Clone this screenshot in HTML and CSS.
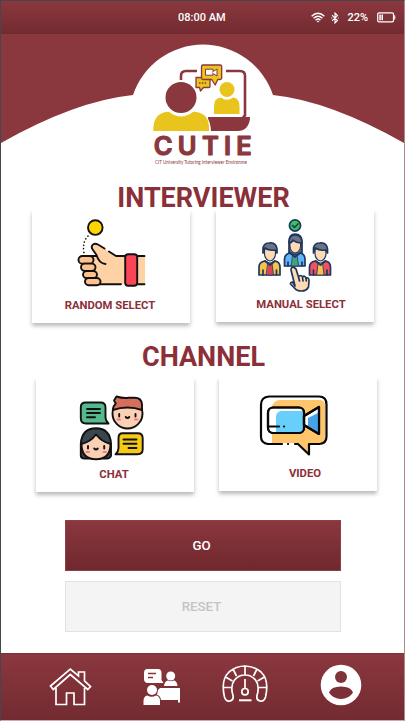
FILE: index.html
```html
<!DOCTYPE html>
<html lang="en">
<head>
<meta charset="utf-8">
<title>CUTIE</title>
<link rel="stylesheet" href="styles.css">
</head>
<body>
<div class="app">
  <div class="status">
    <span class="time">08:00 AM</span>
    <div class="indicators">
      <svg class="wifi" width="14" height="11" viewBox="0 0 14 11" fill="none" stroke="#fff" stroke-width="1.4"><path d="M.6 4.2Q7-1.8 13.4 4.2M2.6 6.3Q7 2 11.4 6.3M4.6 8.2Q7 6 9.4 8.2"/><path d="M5.7 9.2 7 10.6l1.300-1.400Q7 8.300 5.700 9.200Z" fill="#fff" stroke="none"/></svg>
      <svg class="bluetooth" width="8" height="12" viewBox="0 0 8 12" fill="none" stroke="#fff" stroke-width="1.100"><path d="m1 3.200 5.500 5.300L4 11V1l2.500 2.500L1 8.800M.2 6h1M6.700 6h1"/></svg>
      <span class="percent">22%</span>
      <svg class="battery" width="19" height="11" viewBox="0 0 19 11"><rect x=".7" y=".9" width="15.800" height="9" rx="1.300" fill="none" stroke="#fff" stroke-width="1.200"/><path d="M2.300 2.500h1.500v5.800H2.300zM4.500 2.500h1.500v5.800H4.500zM17.200 3q1.200 0 1.200 2.400t-1.200 2.400z" fill="#fff"/></svg>
    </div>
  </div>

  <svg class="hero" width="403" height="140" viewBox="1 34 403 140">
    <path d="M0 34H405V143.500Q330 101 273 95A73.800 73.800 0 0 0 133 95Q75 101 0 143.500Z" fill="#8b373e"/>
    <g fill="none" stroke="#8b373e" stroke-width="2.600"><path d="M181 80v-4q0-5 5-5h11M226 71h14q5 0 5 5v39.500l-2 2"/></g>
    <path d="M208 117h42v2q-2 12-12 12h-30z" fill="#8b373e"/>
    <path d="M151 133q0-23 20-23h20q20 0 20 23" fill="#fff"/>
    <path d="M153.300 131v-3q1-16 15.500-16.300 12.200 9.600 24.400 0Q209 112 209 128v3z" fill="#e8c41c"/>
    <circle cx="181" cy="97.500" r="15.500" fill="#8b373e"/>
    <circle cx="227" cy="89.500" r="7.500" fill="#e8c41c"/>
    <path d="M214 114v-8q0-8 7-8.500 6 4.500 12 0 6.500.5 6.500 8.500v8z" fill="#e8c41c"/>
    <g fill="#e8c41c" stroke="#8b373e" stroke-width="1.300" stroke-linejoin="round"><path d="M196 77.500h13q1 0 1 1v8q0 1-1 1h-5.500l-3 3.500-1-3.500H196z"/><path d="M203 65h17q1.700 0 1.700 1.700V78q0 1.500-1.700 1.500h-2.300l-2.500 5.500-3.500-5.500H203q-1.500 0-1.500-1.500V66.500q0-1.500 1.500-1.500z"/></g>
    <g fill="none" stroke="#8b373e" stroke-width="1"><path d="M205.500 69.200h7.500v6h-7.500z" fill="#fff"/><path d="m213 71.500 4-2.500v7l-4-2.500" fill="#fff"/><path d="M199 83h8" stroke-width="1.500" stroke-dasharray="1.500 1.300"/></g>
    <text class="brand" x="153.800" y="155" textLength="98">CUTIE</text>
    <text class="tagline" x="155" y="164.300" textLength="92" lengthAdjust="spacingAndGlyphs">CIT University Tutoring Interviewer Environme</text>
  </svg>

  <h2 class="title">INTERVIEWER</h2>
  <div class="cards people">
    <div class="card random">
      <svg width="72" height="72" viewBox="76 217 72 72" stroke="#111" stroke-width="1.900" stroke-linecap="round" stroke-linejoin="round">
        <circle cx="95.300" cy="227.600" r="7.300" fill="#ffd400"/>
        <path d="M88 236q-6 6-4 17" fill="none" stroke-width="1.600" stroke-dasharray=".1 3.400"/>
        <path d="M145 256h-29L98 244.500q-6-2-6 3 1 3 5 8.500H84v28h61z" fill="#fed2a4" stroke="none"/>
        <path d="M125 256h-9l-7-4.500M104.500 248.500 98 244.500c-5-2.500-8 2-5 5.500l3.500 5q2.500 8.500 9 9M98 284.300h23M138 256h6.500M138 284.300h6.500M83 256h13.500" fill="none"/>
        <g fill="#fdc18d"><rect x="78.500" y="256" width="15" height="7.700" rx="3.800"/><rect x="81" y="263.600" width="14.500" height="7.400" rx="3.700"/><rect x="83" y="271" width="14" height="7.200" rx="3.600"/><rect x="85" y="278" width="15.500" height="7.200" rx="3.600"/></g>
        <rect x="125.200" y="254.200" width="12" height="31.500" rx="3" fill="#fb4455"/>
      </svg>
      <span>RANDOM SELECT</span>
    </div>
    <div class="card manual">
      <svg width="76" height="76" viewBox="258 218 76 76" stroke="#20375f" stroke-width="1.700" stroke-linecap="round" stroke-linejoin="round">
        <circle cx="296" cy="226.500" r="5.600" fill="#36c65b"/><path d="m293.500 226.500 2 2 3.500-3.500" fill="none"/>
        <g><path d="M260 276v-8q0-5 6-6l5 3 5-3q5 1 5 6v8z" fill="#f4c44e"/><path d="M269 264h4l1.500 12h-7z" fill="#de4257" stroke-width=".8"/><path d="M265.500 250v5q.5 6 5.500 7 5-1 5.500-7v-5z" fill="#ffdbb3" stroke-width="1.200"/><path d="M264 254v-5q1-5 6-5 7-1 8 6v4l-2-3q-6 1-10-2l-2 5z" fill="#6a7488"/><path d="m266 262 5 4 5-4M264 271v5M277.500 271v5" fill="none"/></g>
        <g><path d="M290 256v-13q0-8 6-8 7 0 7 8v13z" fill="#59647b"/><path d="M285.500 267v-7q0-5 6-6l4.500 3 5-3q5 1 5 6v7z" fill="#5fb5fa"/><path d="M294 256h4l1.500 11h-7z" fill="#45a178" stroke-width=".8"/><path d="M291 242v5q.5 6 5 7 5-1 5.500-7v-5z" fill="#ffdbb3" stroke-width="1"/><path d="M290 244q0-8 6-8 7 0 7 8-6 0-9-3-1 3-4 3z" fill="#6a7488"/><path d="m291 254 5 4 5-4M289 263v4M303 263v4" fill="none"/></g>
        <g transform="translate(50.500 0)"><path d="M260 276v-8q0-5 6-6l5 3 5-3q5 1 5 6v8z" fill="#f05360"/><path d="M269 264h4l1.500 12h-7z" fill="#f4c44e" stroke-width=".8"/><path d="M265.500 250v5q.5 6 5.500 7 5-1 5.500-7v-5z" fill="#ffdbb3" stroke-width="1.200"/><path d="M264 254v-5q1-5 6-5 7-1 8 6v4l-2-3q-6 1-10-2l-2 5z" fill="#6a7488"/><path d="m266 262 5 4 5-4M264 271v5M277.500 271v5" fill="none"/></g>
        <path d="m296 287-4-16q0-3 2.500-3l2.500 2 2.500 8q2-3 4 0 2-2 3.500 1 3-1 3 3l-.5 6q-2 4-7 4-5 0-7-3l-4-4q0-2 2-2zM299.500 278l1 4M303.500 278l.5 4M307 279l.3 3" fill="#ffdbb3"/>
      </svg>
      <span>MANUAL SELECT</span>
    </div>
  </div>

  <h2 class="title channel">CHANNEL</h2>
  <div class="cards media">
    <div class="card chat">
      <svg width="68" height="68" viewBox="78 394 68 68" stroke="#111" stroke-width="1.900" stroke-linecap="round" stroke-linejoin="round">
        <path d="M85.500 402.500h15q5 0 5 5v10q0 3 3 6H86q-5.200 0-5.200-5v-11q0-5 4.700-5z" fill="#55b98d"/><path d="M87 409h13M87 413h13M87 417.200h8" fill="none"/>
        <circle cx="127.500" cy="413.500" r="15" fill="#fbd0b4"/><path d="M112.800 410q.2-4 3-6.500l-1.800-3 2.500-4q6 2 12 1.300h6q7 0 7.500 6.500v5.700q-14.500-5-29.200 0z" fill="#d56e5c"/>
        <path d="M80.800 456v-12.500Q82 428.500 96 428.300q14 .2 15 15.200V456q-1 2.500-4 2.500H84.500q-3.200 0-3.700-2.500z" fill="#38464d"/><path d="M81.500 444q9-2 14.500-9.500 6 7.500 14.500 9.500 0 15-14.500 15.300Q81.500 459 81.500 444z" fill="#fbd0b4"/>
        <path d="M122.500 433.300h15.200q5 0 5 5v11q0 5-5 5h-22.200q3-3 3-6v-10q0-5 4-5z" fill="#f5c915"/><path d="M123.500 439.500h13M123.500 443.800h13M128.500 448h8M119.200 414v2.500M135.500 414v2.500M125.700 417q1.800 2 3.600 0M88 446v2.500M104.200 446v2.500M94.200 448.500q1.800 2 3.600 0" fill="none"/>
        <path d="M117.500 419.500h2.500M135 419.500h2.500M86.500 452h2.500M103.500 452h2.500" stroke="#f57c86"/>
      </svg>
      <span>CHAT</span>
    </div>
    <div class="card video">
      <svg width="72" height="66" viewBox="258 392 72 66" stroke="#080808" stroke-width="2.200" stroke-linecap="round" stroke-linejoin="round">
        <path d="M272 442v-37q2-5 7-6h40q6 0 6 5v33q0 5-7 5h-10v10l-9-10z" fill="#fec56a" stroke="none"/>
        <path d="M282 443h-14q-7-1-7-7v-32q0-8 8-8.500h50q7.500 0 7.500 8v32q0 7-7 7.500H309v10.500L298 443h-3M288 443h.1" fill="none"/>
        <rect x="268" y="406.500" width="36" height="25.500" rx="5" fill="#fff"/><path d="M276 431v-16q1-5 6-5h21v21z" fill="#68cffc" stroke="none"/><path d="m304 415 15-9v27l-15-9z" fill="#fff"/><path d="m308 417 10-5v19l-10-6z" fill="#45a3ea" stroke="none"/><rect x="268" y="406.500" width="36" height="25.500" rx="5" fill="none"/><path d="M269 425.500h10M284 425.500h.1" fill="none"/><path d="m304 415 15-9v27l-15-9z" fill="none"/>
      </svg>
      <span>VIDEO</span>
    </div>
  </div>

  <div class="actions"><button class="go">GO</button><button class="reset">RESET</button></div>

  <nav class="nav">
    <svg width="43" height="42" viewBox="49 664 43 42" fill="none" stroke="#fff" stroke-width="1.700"><path d="M50.500 684 70.300 667l8.200 7v-4h6v9l6 5.500-2.700 3-17.500-15-17 15zM56 686V702.500h10.500V691h7.500v11.500h10.500V686"/></svg>
    <svg width="38" height="38" viewBox="143 668 38 38" fill="#fff"><path d="M147.500 669h10.500q3.500 0 3.500 4v7l2 3H148q-4 0-4-4v-6q0-4 3.500-4z"/><path d="M148 673.500h8M148 677.500h5" stroke="#85343a" stroke-width="1.300"/><circle cx="170.700" cy="676" r="4.500"/><path d="M164 686q.5-5 4-5.500 3 1.500 6 0 3 .5 3.500 5.500z"/><circle cx="152" cy="690" r="5"/><path d="M143.500 705v-4q0-5 4-5.500 4 2.500 8.500 0 4 .5 4 5.500v4zM158 690l2-2h20v14.500h-2V700h-17q-1-5-4-5z"/></svg>
    <svg width="48" height="40" viewBox="221 662 48 40" fill="none" stroke="#fff" stroke-width="1.700"><path d="M224.500 695q-4-17 4.500-25 7-6 16-6t16 6q8.500 8 4.500 25-1.500 5-5.500 4-4-1-3-5.500 3-10-1.500-15.500-4-5-10.500-5t-10.500 5q-4.500 5.500-1.500 15.500 1 4.500-3 5.500t-5.500-4zM223.500 685.500h8M225.500 675l7 4M233 667l3.500 7M245 664v9.500M257 667l-3.500 7M264.500 675l-7 4M266.500 685.500h-8M245 677v9.500"/><circle cx="245" cy="689.700" r="3.200"/><path d="M239 698.300h12.500" stroke-width="2"/></svg>
    <svg width="42" height="42" viewBox="320 664 42 42"><circle cx="341" cy="685" r="20.300" fill="#fff"/><circle cx="341" cy="677" r="6" fill="#81333a"/><path d="M329 692.500q2-6 12-6t12 6q-4 6.500-12 6.500t-12-6.500z" fill="#7c3037"/></svg>
  </nav>
</div>
</body>
</html>
```

FILE: styles.css
```css
* { box-sizing: border-box; }
body { margin: 0; background: #fff; font-family: Roboto, "Liberation Sans", sans-serif; }
svg { display: block; flex: none; }
.app { width: 405px; height: 721px; overflow: hidden; display: flex; flex-direction: column; border: 1px solid #44484d; border-right-color: #b98489; border-bottom-color: #c9aeb0; background: #fff; }
.status { flex: none; height: 33px; display: flex; justify-content: space-between; align-items: center; padding-left: 177px; color: #fff; background: linear-gradient(#8b373e, #722b31); font-size: 11px; font-weight: 500; }
.time { margin-top: -1px; }
.indicators { display: flex; align-items: center; padding-right: 8px; }
.percent { margin-top: -1px; }
.bluetooth { margin: 0 8px 0 6px; }
.battery { margin-left: 9px; }
.hero { height: 140px; }
.brand { font: 600 25.5px Inter, sans-serif; fill: #8b373e; stroke: #8b373e; stroke-width: 1.2px; stroke-linejoin: round; }
.tagline { font: 4.8px Lato, sans-serif; fill: #8b373e; }
.title { flex: none; width: 100%; height: 29px; margin: 8px 0 0 1px; line-height: 32px; text-align: center; font-size: 27px; font-weight: 700; color: #8b2f38; background: #fff; position: relative; }
.cards { display: flex; flex: none; margin-top: -1px; align-items: flex-start; }
.people { gap: 26px; padding-left: 31px; }
.media { gap: 25px; padding-left: 35px; }
.card { width: 158px; display: flex; flex-direction: column; align-items: center; background: #fff; box-shadow: 0 3px 4px rgba(0,0,0,.27); color: #8b2f38; font-size: 11.3px; font-weight: 700; line-height: 14px; }
.people .card { height: 113px; padding-top: 7px; }
.people .manual { margin-top: -1px; padding-top: 8px; }
.random svg { margin-left: 1px; }
.random span { margin: 10px 0 0 -2px; }
.manual span { margin: 5px 0 0 12px; }
.channel { margin-top: 18px; height: 38px; }
.media { margin-top: -2px; }
.media .card { height: 115px; padding-top: 17px; }
.media .video { margin-top: -1px; }
.chat svg { margin-left: -6px; }
.chat span { margin: 6px 0 0 -2px; }
.video svg { margin-left: -9px; }
.video span { margin: 8px 0 0 14px; }
.actions { display: flex; flex-direction: column; gap: 10px; padding: 28px 63px 0 64px; }
button { display: block; width: 276px; height: 51px; padding: 0 3px 0 0; border: 1px solid #e2e2e2; font: 500 13.3px Roboto, sans-serif; }
.go { color: #fff; border-color: #8a4248; background: linear-gradient(#8b373e, #6f282e); }
.reset { color: #c4c4c4; background: #f4f4f4; }
.nav { flex: none; height: 67px; margin-top: auto; display: flex; align-items: center; padding-left: 48px; background: linear-gradient(#8b373e, #722b31); border-top: 1px solid #7b3439; }
.nav svg:nth-child(2) { margin-left: 51px; }
.nav svg:nth-child(3) { margin: -6px 0 0 40px; }
.nav svg:nth-child(4) { margin: -4px 0 0 51px; }
```
